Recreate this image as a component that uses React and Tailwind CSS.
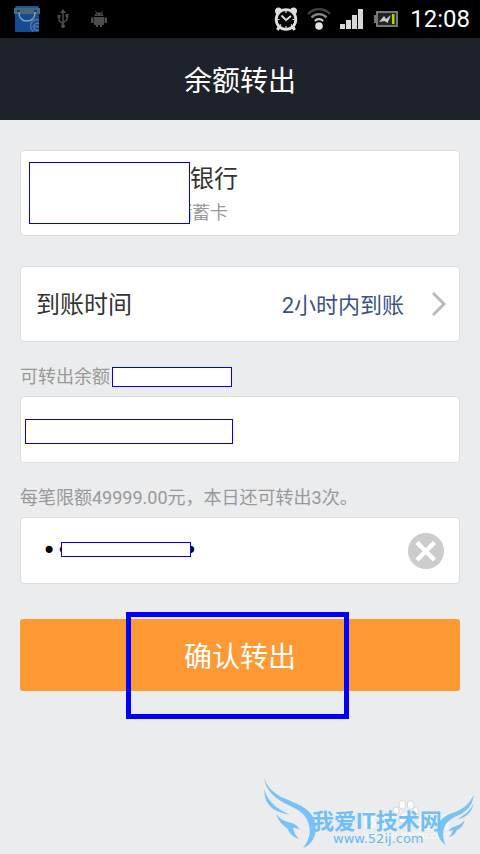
import React from 'react';

const uiFont = "font-[Roboto,'Noto_Sans_CJK_SC',sans-serif]";

function StatusBar() {
    return (
        <div className="flex h-[38px] items-center justify-between bg-black pl-[14px] pr-[10px] text-white">
            <div className="flex items-center">
                {/* Shopping bag */}
                <svg className="h-[26px] w-[26px]" viewBox="0 0 26 26" fill="none">
                    <path d="M1 1.500 2 0h22l1 1.500V25l-1 1H1.500L1 25z" fill="#164a92" />
                    <path d="M0 2h26v6H0z" fill="#46687c" />
                    <path d="M2 0h22v2H2z" fill="#1a57a3" />
                    <path d="M3 4h3v2H3zM20 4h3v2h-3z" fill="#1f3f56" />
                    <path d="M5 6c0 6 3 9 8 9s8-3 8-9" stroke="#8b9caa" strokeWidth="1.500" />
                    <path d="M25 14c-5-1-8.500 2-8.500 6 0 2 1 4 3 5.500M25 17.500c-3-.5-5.500.5-5.500 3.500 0 2 2 3.500 5.500 3.500M20 20.500h5" stroke="#4a79b0" strokeWidth="1.500" />
                </svg>
                {/* USB */}
                <svg className="ml-[17px] h-5 w-3" viewBox="0 0 12 20" fill="none" stroke="#4c4c4c" strokeWidth="1.500">
                    <path d="M6 3v15M2 7v4c0 2 4 3 4 4M10 6v4c0 2-4 3-4 4" />
                    <path d="m6 0 3 4H3z" fill="#4c4c4c" stroke="none" />
                    <path d="M.5 6h3v3h-3zM8.500 5h3v3h-3z" fill="#4c4c4c" stroke="none" />
                    <circle cx="6" cy="17" r="2" fill="#4c4c4c" stroke="none" />
                </svg>
                {/* Debug robot */}
                <svg className="ml-[22px] h-4 w-4" viewBox="0 0 16 16" fill="#4c4c4c">
                    <path d="M3.500 5c0-2 2-3.500 4.500-3.500s4.500 1.500 4.500 3.500zM3 6h10v8H3zM0 6.500h2.500V12H0zM13.500 6.500H16V12h-2.500zM5 14h2v2H5zM9 14h2v2H9z" />
                    <path d="m4.500 0 1.500 2.500M11.500 0 10 2.500" stroke="#4c4c4c" />
                    <path d="M5.500 3.200h1v1h-1zM9.500 3.200h1v1h-1z" fill="#000" />
                </svg>
            </div>
            <div className="flex items-center">
                {/* Alarm */}
                <svg className="h-6 w-6" viewBox="0 0 24 24" fill="none" stroke="#dedede">
                    <circle cx="4.500" cy="4" r="3.500" fill="#dedede" stroke="none" />
                    <circle cx="19.500" cy="4" r="3.500" fill="#dedede" stroke="none" />
                    <path d="m5 20-1.500 3M19 20l1.500 3" strokeWidth="3" />
                    <circle cx="12" cy="12.500" r="9.800" fill="#050505" strokeWidth="2.800" />
                    <path d="m7.500 8.500 4.500 4.500 5-4" strokeWidth="1.800" />
                    <path d="M12 4v2M12 19v2M3.500 12.500h2M18.500 12.500h2M6 18.500l1-1M18 18.500l-1-1" strokeWidth="1.200" />
                </svg>
                {/* Wi-Fi */}
                <svg className="ml-[9px] h-[22px] w-6" viewBox="0 0 24 22" fill="none">
                    <path d="M1 6C7-.5 17-.5 23 6" stroke="#444" strokeWidth="2.200" />
                    <path d="M4.500 9.500c4-4.500 11-4.500 15 0" stroke="#888" strokeWidth="2.200" />
                    <path d="M8 13c2-2.500 6-2.500 8 0" stroke="#ccc" strokeWidth="2.200" />
                    <circle cx="12" cy="18" r="3.800" fill="#e2e2e2" />
                </svg>
                {/* Signal */}
                <svg className="ml-[9px] h-5 w-6" viewBox="0 0 24 20" fill="#d8d8d8">
                    <path d="M0 15h5v5H0zM6 11h5v9H6zM12 6h5v14h-5zM18 0h5v20h-5z" />
                </svg>
                {/* Battery */}
                <svg className="ml-[10px] h-4 w-6" viewBox="0 0 24 16" fill="none">
                    <path d="M0 4h3v8H0z" fill="#777" />
                    <path d="M3 1h20v14H3z" fill="#222" stroke="#777" strokeWidth="2" />
                    <path d="M18 3h2.500v10H18z" fill="#a5db00" />
                    <path d="m5 11 5-6 2 3 5-4-3.500 8-3-2z" fill="#ccc" />
                </svg>
                <span className="ml-3 text-2xl">12:08</span>
            </div>
        </div>
    );
}

function Watermark() {
    return (
        <div className="absolute bottom-0 right-0 h-[89px] w-[230px]" aria-hidden="true">
            <div className="absolute left-[113px] top-[44px] whitespace-nowrap text-[22px] font-bold leading-6 text-[#f7f8f8]">Bai</div>
            <div className="absolute left-[168px] top-[46px] whitespace-nowrap text-[16px] font-bold leading-6 text-[#f7f8f8]">经验</div>
            <div className="absolute left-[113px] top-[63px] whitespace-nowrap text-[11px] leading-4 text-[#f7f8f8]">jingyan.baidu.com</div>
            <svg className="absolute inset-0 h-full w-full" viewBox="0 0 690 267">
                <g fill="#fafafa" stroke="#d6d7d8" strokeWidth="3">
                    <ellipse cx="438" cy="137" rx="9" ry="12" />
                    <ellipse cx="457" cy="119" rx="10" ry="13" />
                    <ellipse cx="482" cy="120" rx="10" ry="13" />
                    <ellipse cx="497" cy="139" rx="9" ry="12" />
                    <path d="M447 164c0-13 12-24 23-24s24 13 24 24c0 10-10 12-24 10-14 2-23 0-23-10z" />
                </g>
                <g fill="#78c2f5">
                    <path d="M42 38c10 30 30 49 66 64 48 20 82 35 88 75 5 34-8 60-37 73 17-22 24-43 18-70-7-29-27-44-62-60C76 101 48 78 42 38z" />
                    <path d="M43 72c7 30 28 55 74 76-45-6-76-28-74-76z" />
                    <path d="M79 148c13 16 25 22 46 26 12 3 17 9 24 20-8-4-14-6-21-5 6 17 11 26 21 34-19-6-31-18-36-32-16-10-28-23-34-43z" />
                    <path d="M671 90c-14 31-35 44-64 54-27 10-43 22-44 49-1 20 7 36 23 46-7-20-9-38-2-54 7-18 23-26 43-35 25-12 41-30 44-60z" />
                    <path d="M670 116c-5 27-19 39-49 48 26-17 40-28 49-48z" />
                    <path d="M644 166c-10 12-20 15-31 19-10 2-14 7-17 14l13-4c-3 10-7 16-13 22 13-3 21-12 24-21 13-6 20-15 24-30z" />
                </g>
            </svg>
            <div className="absolute left-[62px] top-[43px] whitespace-nowrap text-[22px] font-bold leading-7 text-[#71bff5]">我爱IT技术网</div>
            <div className="absolute left-[83px] top-[66px] whitespace-nowrap font-['DejaVu_Sans',sans-serif] text-[13px] leading-4 text-[#64b9f4]">www.52ij.com</div>
        </div>
    );
}

function App() {
    return (
        <div className={`relative flex min-h-screen flex-col bg-[#ebecee] ${uiFont}`}>
            <StatusBar />
            <header className="flex h-[82px] items-center justify-center bg-[#1e222b] pt-[6px] text-white">
                <h1 className="text-[28px] leading-10">余额转出</h1>
            </header>

            <main className="flex flex-col px-5 pt-[30px]">
                {/* Bank card */}
                <section className="relative h-[86px] rounded border border-[#dcdddf] bg-white pt-[10px]">
                    <div className="pl-[169px] text-2xl leading-9 text-[#333]">银行</div>
                    <div className="pl-[153px] text-lg leading-8 text-[#999]">储蓄卡</div>
                    <div className="absolute left-2 top-[11px] h-[62px] w-[161px] border border-[#0000ff] bg-white" />
                </section>

                {/* Arrival time */}
                <button type="button" className="mt-[30px] flex h-[76px] items-center rounded border border-[#dcdddf] bg-white pl-[15px] pr-3 text-left">
                    <span className="flex-1 pt-[2px] text-2xl text-[#333]">到账时间</span>
                    <span className="pt-[2px] text-[22px] text-[#385487]">2小时内到账</span>
                    <svg className="ml-[27px] h-6 w-4" viewBox="0 0 16 24" fill="none" stroke="#bbb" strokeWidth="3">
                        <path d="m2 1 11 11L2 23" />
                    </svg>
                </button>

                <label htmlFor="amount" className="mt-[21px] flex h-7 items-center text-lg text-[#999]">
                    可转出余额
                    <span className="ml-[2px] h-5 w-[120px] border border-[#0000ff] bg-white" />
                </label>
                <div className="relative mt-[5px] flex h-[67px] rounded border border-[#dcdddf] bg-white">
                    <input id="amount" type="text" className="w-full bg-transparent px-4 text-2xl outline-none" />
                    <div className="absolute left-1 top-[22px] h-[25px] w-[208px] border border-[#0000ff] bg-white" />
                </div>

                <label htmlFor="password" className="mt-[21px] block h-7 text-lg leading-7 text-[#999]">
                    每笔限额49999.00元，本日还可转出3次。
                </label>
                <div className="relative mt-[5px] flex h-[67px] items-center rounded border border-[#dcdddf] bg-white pr-[15px]">
                    <input
                        id="password"
                        type="password"
                        defaultValue="00000000000"
                        className="h-full min-w-0 flex-1 bg-transparent pl-[21px] font-['DejaVu_Sans',sans-serif] text-2xl text-black outline-none"
                    />
                    <div className="absolute left-10 top-6 h-[15px] w-[130px] border border-[#0000ff] bg-white" />
                    <button type="button" aria-label="清除" className="h-9 w-9 rounded-full bg-[#ccc]">
                        <svg className="h-9 w-9" viewBox="0 0 36 36" stroke="#fff" strokeWidth="4.500">
                            <path d="m9 9.500 17.500 17.500M26.500 9.500 9 27" />
                        </svg>
                    </button>
                </div>

                <div className="relative mt-[35px]">
                    <button type="submit" className="h-[72px] w-full rounded-[3px] bg-[#ff9933] pt-[6px] text-[28px] text-white">
                        确认转出
                    </button>
                    <div className="pointer-events-none absolute -top-[7px] left-[106px] h-[107px] w-[223px] border-[5px] border-[#0000ff]" />
                </div>
            </main>

            <Watermark />
        </div>
    );
}

export default App;
